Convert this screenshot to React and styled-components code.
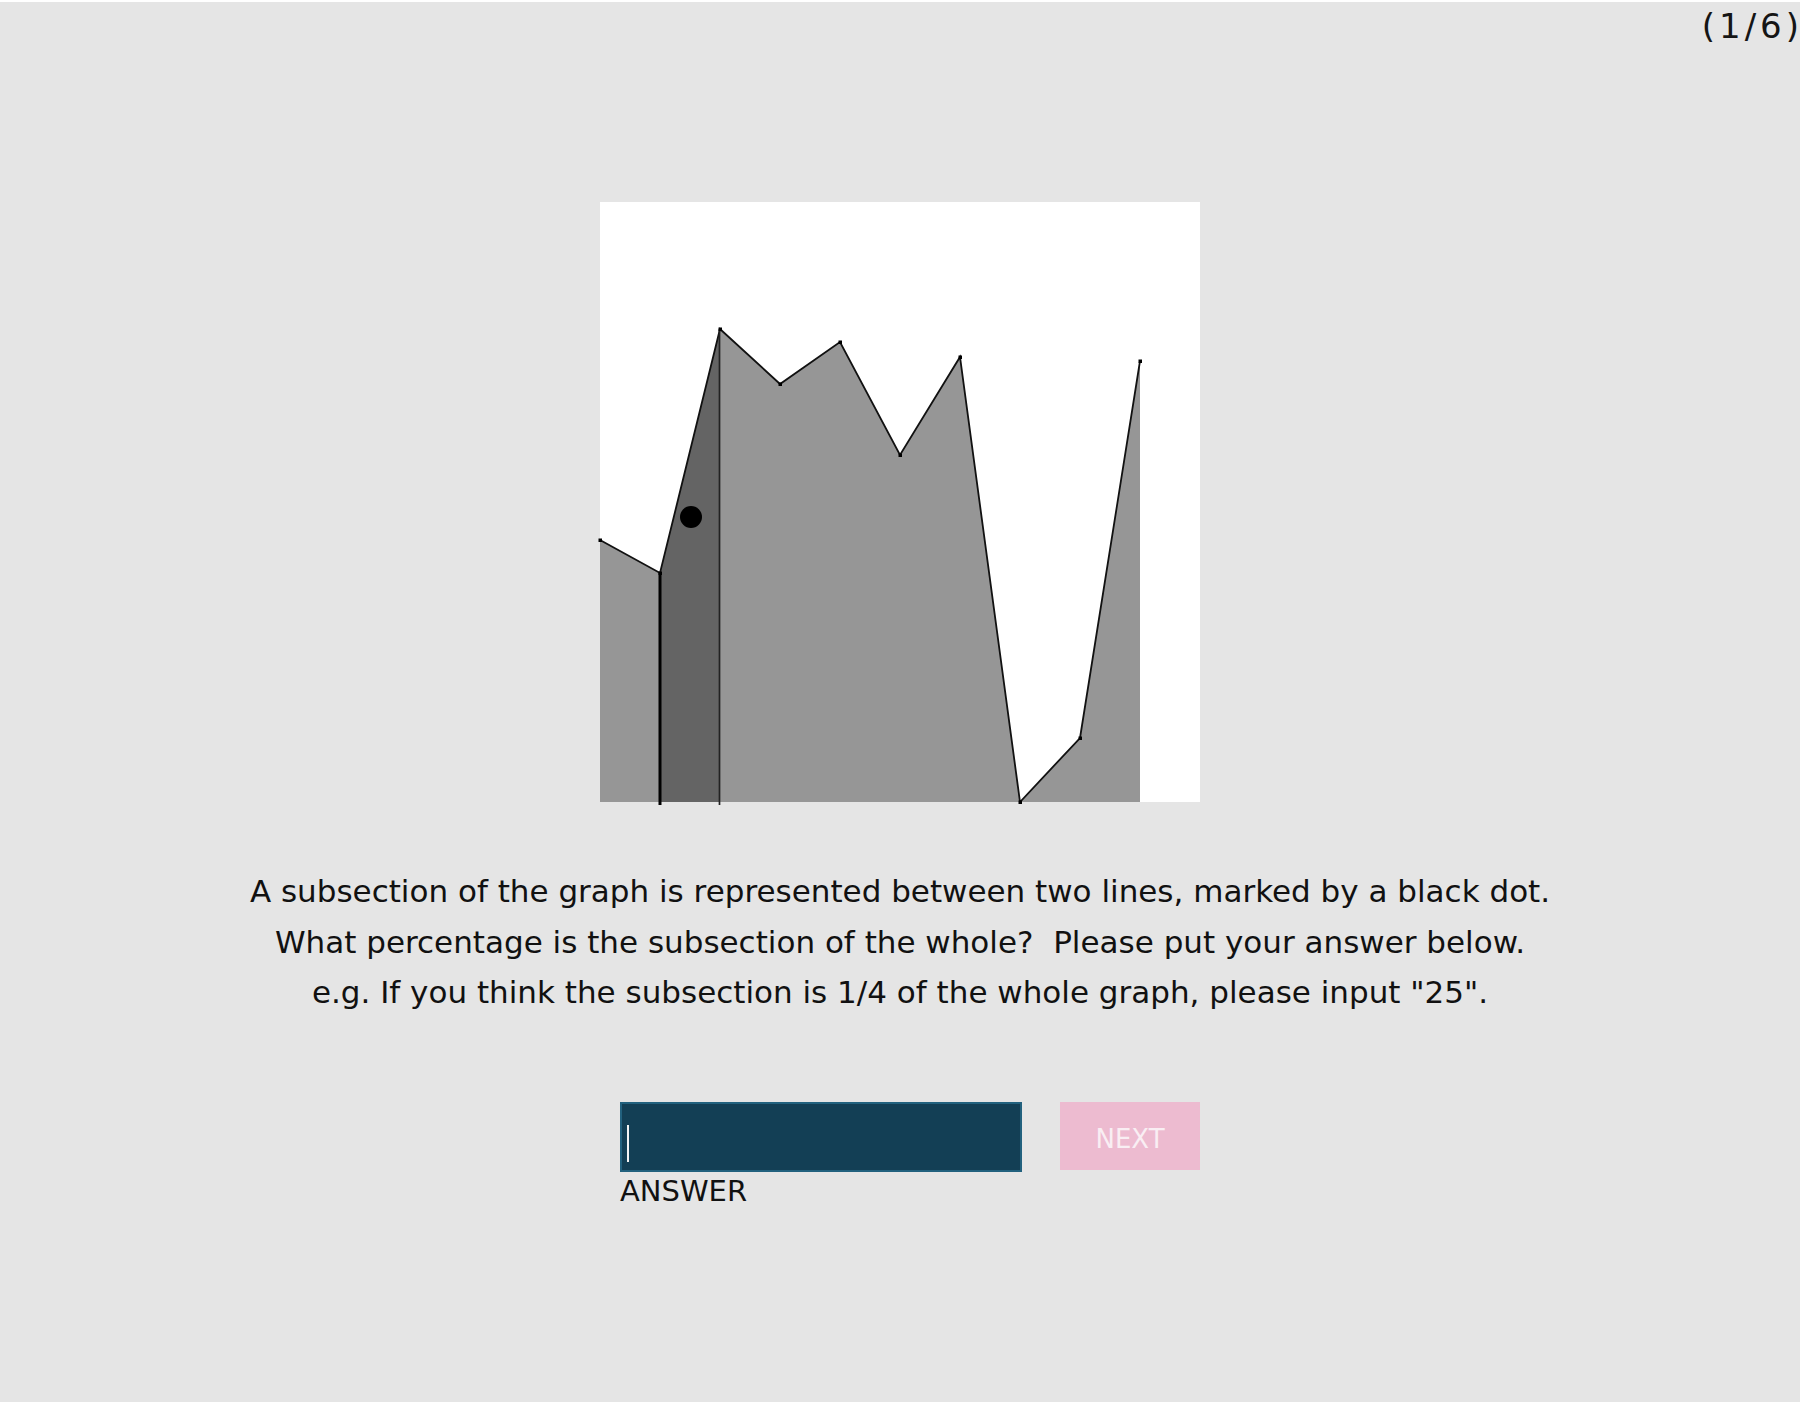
import React from 'react';
import styled, { createGlobalStyle } from 'styled-components';

const GlobalStyle = createGlobalStyle`
  html, body {
    margin: 0;
    padding: 0;
    background: #ffffff;
  }
  body {
    font-family: "DejaVu Sans", "Liberation Sans", sans-serif;
    color: #111;
  }
`;

const Stage = styled.div`
  width: 1800px;
  height: 1400px;
  margin-top: 2px;
  background: #e5e5e5;
  display: flex;
  flex-direction: column;
  align-items: center;
`;

const TopBar = styled.div`
  align-self: stretch;
  height: 200px;
  display: flex;
  justify-content: flex-end;
  align-items: flex-start;
`;

const Counter = styled.div`
  font-size: 34px;
  padding-top: 4px;
  letter-spacing: 4px;
  margin-right: -3px;
  color: #151515;
`;

const Prompt = styled.p`
  margin: 64px 0 0;
  font-size: 31px;
  line-height: 50.5px;
  text-align: center;
  color: #111;
  white-space: pre;
`;

const AnswerRow = styled.div`
  width: 600px;
  box-sizing: border-box;
  padding-left: 20px;
  margin-top: 84px;
  display: flex;
  align-items: flex-start;
  gap: 38px;
`;

const AnswerGroup = styled.div`
  display: flex;
  flex-direction: column;
  gap: 2px;
`;

const Field = styled.div`
  width: 402px;
  height: 70px;
  box-sizing: border-box;
  border: 2px solid #22617e;
  background: #133f55;
  display: flex;
  align-items: flex-start;
  padding: 21px 0 0 5px;
`;

const Caret = styled.span`
  width: 2px;
  height: 37px;
  background: #f4f4f4;
  flex: none;
`;

const Input = styled.input`
  flex: 1;
  min-width: 0;
  background: transparent;
  border: none;
  outline: none;
  color: #fff;
  font: inherit;
  font-size: 28px;
  padding: 0;
  height: 37px;
`;

const FieldLabel = styled.label`
  font-size: 29px;
  color: #111;
`;

const NextButton = styled.button`
  width: 140px;
  height: 68px;
  border: none;
  background: #edbbd0;
  color: #f9eef3;
  font-family: "DejaVu Sans", "Liberation Sans", sans-serif;
  font-size: 26px;
  padding: 7px 0 0;
  cursor: pointer;
`;

const points = [
  [0, 338], [60, 371], [120, 127], [180, 182], [240, 140],
  [300, 253], [360, 155], [420, 600], [480, 536], [540, 159],
];

const Chart = () => {
  const line = points.map(([x, y]) => `${x},${y}`).join(' ');
  const area = `0,600 ${line} 540,600`;
  const band = `60,600 60,371 120,127 120,600`;
  return (
    <svg width="600" height="600" viewBox="0 0 600 600" style={{ overflow: 'visible', display: 'block' }}>
      <rect x="0" y="0" width="600" height="600" fill="#ffffff" />
      <polygon points={area} fill="#969696" />
      <polygon points={band} fill="#646464" />
      <polyline points={line} fill="none" stroke="#111" strokeWidth="1.8" />
      <line x1="60" y1="371" x2="60" y2="603" stroke="#000" strokeWidth="3" />
      <line x1="119.5" y1="127" x2="119.5" y2="603" stroke="#222" strokeWidth="1.7" />
      {points.map(([x, y]) => (
        <rect key={x} x={x - 1.5} y={y - 1.5} width="3.5" height="3.5" fill="#000" />
      ))}
      <circle cx="91" cy="315" r="11" fill="#000" />
    </svg>
  );
};

const App = () => (
  <>
    <GlobalStyle />
    <Stage>
      <TopBar>
        <Counter>(1/6)</Counter>
      </TopBar>
      <Chart />
      <Prompt>
        {'A subsection of the graph is represented between two lines, marked by a black dot.\n'}
        {'What percentage is the subsection of the whole?  Please put your answer below.\n'}
        {'e.g. If you think the subsection is 1/4 of the whole graph, please input "25".'}
      </Prompt>
      <AnswerRow>
        <AnswerGroup>
          <Field>
            <Caret />
            <Input id="answer" type="text" aria-label="answer" />
          </Field>
          <FieldLabel htmlFor="answer">ANSWER</FieldLabel>
        </AnswerGroup>
        <NextButton>NEXT</NextButton>
      </AnswerRow>
    </Stage>
  </>
);

export default App;
